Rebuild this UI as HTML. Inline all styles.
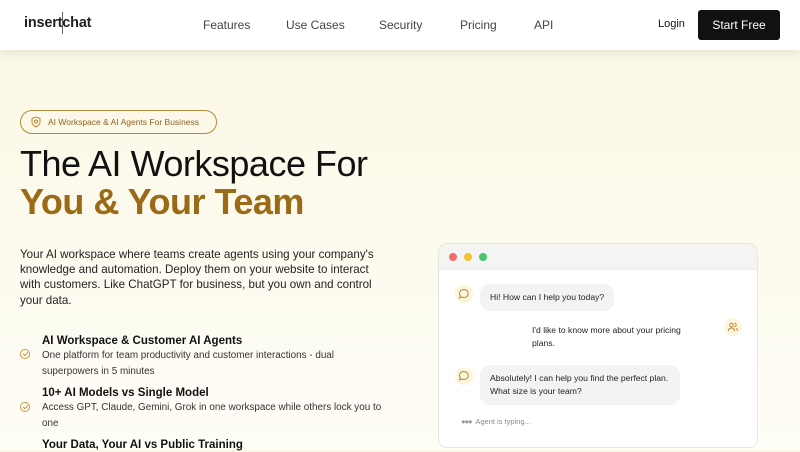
<!DOCTYPE html>
<html><head><meta charset="utf-8"><style>
*{margin:0;padding:0;box-sizing:border-box}
body{width:800px;height:450px;overflow:hidden;font-family:"Liberation Sans",sans-serif;background:linear-gradient(180deg,#fbf7e4 0%,#fdfbef 60%,#fefdf6 100%);position:relative;color:#111}
.nav{position:absolute;left:0;top:0;width:800px;height:50px;background:#fff;box-shadow:0 2px 10px rgba(0,0,0,.1)}
.logo{position:absolute;left:24px;top:15px;font-size:14.5px;font-weight:bold;color:#222;letter-spacing:-.2px}
.logo i{position:absolute;left:38px;top:-3px;width:1px;height:22px;background:#666}
.nl{position:absolute;top:18px;font-size:12px;color:#444}
.login{position:absolute;left:658px;top:18px;font-size:11px;color:#111}
.btn{position:absolute;left:698px;top:10px;width:82px;height:30px;background:#111;color:#fff;font-size:12px;border-radius:3px;text-align:center;line-height:30px}
.badge{position:absolute;left:20px;top:110px;width:197px;height:24px;border:1px solid #b58a3a;border-radius:12px;font-size:8.5px;color:#8a6420;line-height:22px;padding-left:27px}
.badge svg{position:absolute;left:10px;top:5px}
h1{position:absolute;left:20px;top:145px;font-size:36px;font-weight:normal;line-height:38px;letter-spacing:-.5px;color:#111}
h1 b{color:#9a6a16}
.p{position:absolute;left:20px;top:247px;width:362px;font-size:11.6px;line-height:15.2px;color:#222}
.f{position:absolute;left:42px;width:345px}
.f h3{font-size:11.5px;font-weight:bold;color:#111;line-height:14px}
.f div{font-size:9.9px;color:#333;line-height:16px}
.ck{position:absolute;left:20px;width:10px;height:10px;border:1.2px solid #c49a3a;border-radius:50%}
.ck:after{content:"";position:absolute;left:2px;top:1.5px;width:4px;height:2px;border-left:1.2px solid #c49a3a;border-bottom:1.2px solid #c49a3a;transform:rotate(-45deg)}
.win{position:absolute;left:438px;top:243px;width:320px;height:205px;background:#fff;border:1px solid #e8e6df;border-radius:9px;overflow:hidden}
.bar{height:26px;background:#f4f4f3;border-bottom:1px solid #ececec;position:relative}
.d{position:absolute;top:9px;width:8px;height:8px;border-radius:50%}
.bub{position:absolute;background:#f3f3f3;border-radius:10px;font-size:8.6px;color:#222;line-height:13px;padding:7px 10px}
.ic{position:absolute;width:18px;height:18px;border-radius:50%;background:#fdf6dc}
.ic svg{position:absolute;left:3px;top:3px}
</style></head><body>
<div class="nav">
<div class="logo">insert<i></i>chat</div>
<span class="nl" style="left:203px">Features</span>
<span class="nl" style="left:286px">Use Cases</span>
<span class="nl" style="left:379px">Security</span>
<span class="nl" style="left:460px">Pricing</span>
<span class="nl" style="left:534px">API</span>
<span class="login">Login</span>
<div class="btn">Start Free</div>
</div>
<div class="badge"><svg width="10" height="12" viewBox="0 0 10 12"><path d="M5 1 L9 2.5 V6 C9 8.5 7 10 5 11 C3 10 1 8.5 1 6 V2.5 Z" fill="none" stroke="#b58a3a" stroke-width="1"/><circle cx="5" cy="5.5" r="1.5" fill="none" stroke="#b58a3a"/></svg>AI Workspace &amp; AI Agents For Business</div>
<h1>The AI Workspace For<br><b>You &amp; Your Team</b></h1>
<div class="p">Your AI workspace where teams create agents using your company's knowledge and automation. Deploy them on your website to interact with customers. Like ChatGPT for business, but you own and control your data.</div>
<div class="f" style="top:334px"><h3>AI Workspace &amp; Customer AI Agents</h3><div>One platform for team productivity and customer interactions - dual superpowers in 5 minutes</div></div>
<span class="ck" style="top:349px"></span>
<div class="f" style="top:386px"><h3>10+ AI Models vs Single Model</h3><div>Access GPT, Claude, Gemini, Grok in one workspace while others lock you to one</div></div>
<span class="ck" style="top:402px"></span>
<div class="f" style="top:438px"><h3>Your Data, Your AI vs Public Training</h3></div>
<div class="win">
<div class="bar"><span class="d" style="left:10px;background:#f06b6b"></span><span class="d" style="left:25px;background:#f5c232"></span><span class="d" style="left:40px;background:#45c96d"></span></div>
<span class="ic" style="left:16px;top:41px"><svg width="12" height="12" viewBox="0 0 12 12"><path d="M6 1.5a4.3 4 0 1 1-2.2 7.5L1.5 10l.8-2.2A4.3 4 0 0 1 6 1.5z" fill="none" stroke="#b58a3a" stroke-width="1"/></svg></span>
<div class="bub" style="left:41px;top:40px">Hi! How can I help you today?</div>
<div class="bub" style="left:83px;top:77px;background:#fff;width:180px;padding:3px 10px">I'd like to know more about your pricing plans.</div>
<span class="ic" style="left:285px;top:74px"><svg width="12" height="12" viewBox="0 0 12 12" fill="none" stroke="#b58a3a" stroke-width="1"><circle cx="4.5" cy="4" r="1.8"/><path d="M1.5 10c0-2 1.3-3 3-3s3 1 3 3"/><path d="M7.5 2.3a1.7 1.7 0 0 1 0 3.4M9 7.3c1 .4 1.5 1.3 1.5 2.7"/></svg></span>
<span class="ic" style="left:16px;top:123px"><svg width="12" height="12" viewBox="0 0 12 12"><path d="M6 1.5a4.3 4 0 1 1-2.2 7.5L1.5 10l.8-2.2A4.3 4 0 0 1 6 1.5z" fill="none" stroke="#b58a3a" stroke-width="1"/></svg></span>
<div class="bub" style="left:41px;top:121px;width:200px">Absolutely! I can help you find the perfect plan. What size is your team?</div>
<div style="position:absolute;left:22px;top:173px;font-size:7.5px;color:#888"><span style="color:#999;letter-spacing:-1px">●●●</span>&nbsp; Agent is typing...</div>
</div>
</body></html>
